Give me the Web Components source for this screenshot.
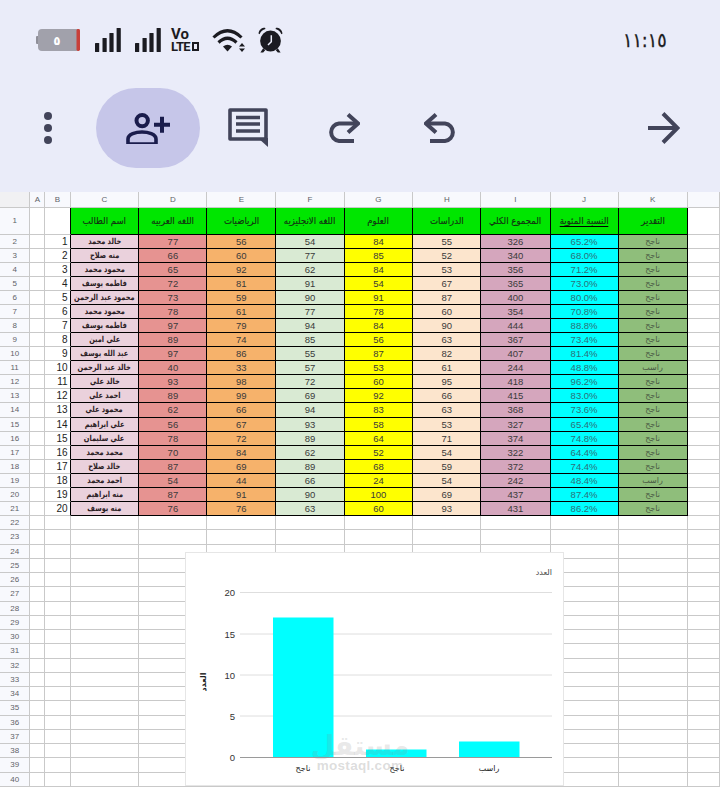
<!DOCTYPE html>
<html lang="ar">
<head>
<meta charset="utf-8">
<title>Sheet</title>
<style>
	html, body { margin: 0; padding: 0; background: #fff; }
	body { width: 720px; height: 788px; overflow: hidden; font-family: "Liberation Sans", "DejaVu Sans", sans-serif; }
</style>
</head>
<body>
<phone-screen>
	<status-bar slot="top" time="١١:١٥"></status-bar>
	<sheet-toolbar slot="top"></sheet-toolbar>
	<sheet-grid></sheet-grid>
	<sheet-chart slot="over"></sheet-chart>
</phone-screen>

<script>
(() => {

	const font = `"Liberation Sans", "DejaVu Sans", sans-serif`;
	const icon_color = '#42445a';
	const ink = '#1b1b21';

	const col_edges = [30.3, 45.3, 70.6, 139.4, 207.4, 276.3, 344.7, 413.3, 481.3, 550.6, 618.6, 687.6, 720];
	const col_letters = ['A', 'B', 'C', 'D', 'E', 'F', 'G', 'H', 'I', 'J', 'K', ''];
	const headers = ['اسم الطالب', 'اللغه العربيه', 'الرياضيات', 'اللغه الانجليزيه', 'العلوم', 'الدراسات', 'المجموع الكلي', 'النسبة المئوية', 'التقدير'];
	const pass = 'ناجح';
	const fail = 'راسب';

	// name, arabic, maths, english, science, studies, total
	const students = [
		['خالد محمد', 77, 56, 54, 84, 55, 326],
		['منه صلاح', 66, 60, 77, 85, 52, 340],
		['محمود محمد', 65, 92, 62, 84, 53, 356],
		['فاطمه يوسف', 72, 81, 91, 54, 67, 365],
		['محمود عبد الرحمن', 73, 59, 90, 91, 87, 400],
		['محمود محمد', 78, 61, 77, 78, 60, 354],
		['فاطمه يوسف', 97, 79, 94, 84, 90, 444],
		['علي امين', 89, 74, 85, 56, 63, 367],
		['عبد الله يوسف', 97, 86, 55, 87, 82, 407],
		['خالد عبد الرحمن', 40, 33, 57, 53, 61, 244],
		['خالد علي', 93, 98, 72, 60, 95, 418],
		['احمد علي', 89, 99, 69, 92, 66, 415],
		['محمود علي', 62, 66, 94, 83, 63, 368],
		['علي ابراهيم', 56, 67, 93, 58, 53, 327],
		['علي سليمان', 78, 72, 89, 64, 71, 374],
		['محمد محمد', 70, 84, 62, 52, 54, 322],
		['خالد صلاح', 87, 69, 89, 68, 59, 372],
		['احمد محمد', 54, 44, 66, 24, 54, 242],
		['منه ابراهيم', 87, 91, 90, 100, 69, 437],
		['منه يوسف', 76, 76, 63, 60, 93, 431]
	];

	// one fill per column, C to K
	const fills = ['#ead1dc', '#e69391', '#f6b26b', '#d9ead3', '#ffff00', '#fce5cd', '#d5a6bd', '#00ffff', '#8fbe7b'];

	customElements.define('phone-screen',
		class PhoneScreen extends HTMLElement {
			constructor() {
				super();
				this.attachShadow({ mode: 'open' });
				this.shadowRoot.innerHTML = `
					<style>
						:host {
							display: block;
							position: relative;
							width: 720px;
							height: 788px;
							overflow: hidden;
							background: #fff;
							font-family: ${font};
						}

						.top {
							height: 192px;
							background: #eaecf9;
						}
					</style>
					<div class="top"><slot name="top"></slot></div>
					<slot></slot>
					<slot name="over"></slot>
				`;
			}
		}
	);

	customElements.define('status-bar',
		class StatusBar extends HTMLElement {
			constructor() {
				super();
				this.attachShadow({ mode: 'open' });
				const signal = `
					<svg class="signal" width="26" height="24" viewBox="0 0 26 24" fill="${ink}">
						<rect x="0" y="15" width="4.2" height="9" rx=".6"/>
						<rect x="7.5" y="10" width="4.2" height="14" rx=".6"/>
						<rect x="14.4" y="5" width="4.2" height="19" rx=".6"/>
						<rect x="21.6" y="0" width="4.2" height="24" rx=".6"/>
					</svg>
				`;
				this.shadowRoot.innerHTML = `
					<style>
						:host {
							display: flex;
							align-items: center;
							height: 88px;
							box-sizing: border-box;
							padding: 0 53px 8px 36px;
						}

						svg { flex: none; display: block; }
						.signal { margin-left: 14px; }
						.signal.first { margin-left: 15px; }

						.volte {
							flex: none;
							width: 31px;
							margin-left: 10px;
							color: ${ink};
							font: 700 15px/13px Roboto, sans-serif;
						}

						.lte {
							display: flex;
							align-items: center;
							height: 12px;
							font-size: 13px;
							line-height: 12px;
							letter-spacing: -.7px;
						}

						.lte i {
							display: block;
							width: 7px;
							height: 9px;
							box-sizing: border-box;
							margin-left: 2px;
							border: 2.3px solid ${ink};
						}

						.time {
							margin-left: auto;
							font: 400 20px "DejaVu Sans", sans-serif;
							color: ${ink};
							-webkit-text-stroke: .3px ${ink};
							direction: ltr;
							transform: scaleX(.88);
							transform-origin: right center;
						}
					</style>
					<svg width="44" height="24" viewBox="0 0 44 24">
						<rect x="0" y="8" width="3" height="8" rx="1" fill="#8f8f99"/>
						<rect x="2" y="1" width="42" height="22" rx="4" fill="#a1a1ab"/>
						<rect x="40.5" y="1" width="3.5" height="22" rx="1.4" fill="#c8403a"/>
						<text x="21" y="16.5" text-anchor="middle" font-family="DejaVu Sans" font-weight="700" font-size="12" fill="#fff">٥</text>
					</svg>
					${signal.replace('class="signal"', 'class="signal first"')}
					${signal}
					<div class="volte">Vo<div class="lte">LTE<i></i></div></div>
					<svg style="margin-left:10px" width="34" height="24" viewBox="0 0 34 24" fill="${ink}">
						<g fill="none" stroke="${ink}" stroke-width="3.1">
							<path d="M1.5 9.5Q15.5-4 29.5 9.5"/>
							<path d="M6.5 14.5Q15.5 6 24.5 14.5"/>
						</g>
						<path d="M11 18.5Q15.5 15 20 18.5L15.5 23.5z"/>
						<path d="M30 15l3 3.6h-6zM27 20.6h6L30 24z"/>
					</svg>
					<svg style="margin-left:12px" width="25" height="26" viewBox="0 0 25 26" fill="${ink}">
						<circle cx="12.5" cy="14" r="10.4"/>
						<path d="M0.5 6.5C1 2.8 3.6 0.8 7 0.8L7.5 2C4.8 2.8 2.8 4.4 1.6 7.2zM24.5 6.5C24 2.8 21.4 0.8 18 0.8L17.5 2C20.2 2.8 22.2 4.4 23.4 7.2z"/>
						<path d="M5 21.5L2.4 25.5H5.2L7.4 23zM20 21.5L22.6 25.5H19.8L17.6 23z"/>
						<path d="M13.3 8.2V14.8L10 18" fill="none" stroke="#eaecf9" stroke-width="1.5"/>
					</svg>
					<div class="time">${this.getAttribute('time')}</div>
				`;
			}
		}
	);

	customElements.define('sheet-toolbar',
		class SheetToolbar extends HTMLElement {
			constructor() {
				super();
				this.attachShadow({ mode: 'open' });
				this.shadowRoot.innerHTML = `
					<style>
						:host {
							display: grid;
							grid-template-columns: 96px 104px 96px 96px 96px 1fr 96px 8px;
							height: 80px;
						}

						.cell {
							display: flex;
							align-items: center;
							justify-content: center;
						}

						.pill {
							background: #c6c6e9;
							border-radius: 40px;
						}
					</style>
					<div class="cell">
						<svg width="10" height="34" viewBox="0 0 10 34" fill="${icon_color}">
							<circle cx="5" cy="5" r="4"/>
							<circle cx="5" cy="17" r="4"/>
							<circle cx="5" cy="29" r="4"/>
						</svg>
					</div>
					<div class="cell pill">
						<svg width="44" height="32" viewBox="0 0 44 32" fill="none" stroke="#1a1c4c" stroke-width="4">
							<circle cx="16.2" cy="8.6" r="5.7"/>
							<path d="M2 32V27C2 22 10 20 16 20S30 22 30 27V32H2Z" stroke-width="3.6"/>
							<path d="M28 12.7H44M36 4.7V20.7" />
						</svg>
					</div>
					<div class="cell">
						<svg width="40" height="39" viewBox="0 0 40 39" style="margin-top:-1px">
							<path d="M2 2H38V31H2Z" fill="none" stroke="${icon_color}" stroke-width="3.6" stroke-linejoin="round"/>
							<path d="M30 30H40V39Z" fill="${icon_color}"/>
							<path d="M8 9.5H32M8 16H32M8 23H32" stroke="${icon_color}" stroke-width="3.6"/>
						</svg>
					</div>
					<div class="cell">
						<svg width="32" height="30" viewBox="0 0 32 30" fill="none" stroke="${icon_color}" stroke-width="4" style="transform:scaleX(-1)">
							<path d="M12 1.5L2 10.5L12 19.5"/>
							<path d="M2 10.5H21A8.8 8.8 0 0 1 21 28H6"/>
						</svg>
					</div>
					<div class="cell">
						<svg width="32" height="30" viewBox="0 0 32 30" fill="none" stroke="${icon_color}" stroke-width="4">
							<path d="M12 1.5L2 10.5L12 19.5"/>
							<path d="M2 10.5H21A8.8 8.8 0 0 1 21 28H6"/>
						</svg>
					</div>
					<div></div>
					<div class="cell">
						<svg width="32" height="32" viewBox="0 0 32 32" fill="none" stroke="${icon_color}" stroke-width="4">
							<path d="M0 16H29"/>
							<path d="M15 1.5L29.5 16L15 30.5"/>
						</svg>
					</div>
					<div></div>
				`;
			}
		}
	);

	customElements.define('sheet-grid',
		class SheetGrid extends HTMLElement {
			constructor() {
				super();
				this.attachShadow({ mode: 'open' });

				const widths = col_edges.map((edge, i) => (edge - (col_edges[i - 1] || 0)).toFixed(1) + 'px');
				const heights = ['15.5px', '27px', ...Array(20).fill('14.08px'), ...Array(19).fill('14.25px')];

				let cells = '<div class="head corner"></div>';
				cells += col_letters.map(letter => `<div class="head">${letter}</div>`).join('');

				cells += this.title_row();
				students.forEach((student, i) => {
					cells += this.student_row(student, i);
				});

				for (let row = 22; row <= 40; row++) {
					cells += `<div class="head side">${row}</div>`;
					cells += col_letters.map(() => '<div class="cell"></div>').join('');
				}

				this.shadowRoot.innerHTML = `
					<style>
						:host {
							display: grid;
							grid-template-columns: ${widths.join(' ')};
							grid-template-rows: ${heights.join(' ')};
							background: #fff;
							color: #3a3a3a;
						}

						div {
							box-sizing: border-box;
							display: flex;
							align-items: center;
							justify-content: center;
							min-width: 0;
							white-space: nowrap;
							border-right: 1px solid #c9c9c9;
							border-bottom: 1px solid #c9c9c9;
						}

						span { flex: none; display: block; }

						.head {
							background: #f8f9fd;
							color: #5f6368;
							font-size: 8px;
						}

						.corner { background: #f1f1f3; }

						.data {
							font-size: 9.5px;
							border-right-color: #000;
							border-bottom-color: #000;
						}

						.name {
							font: 700 7.5px "DejaVu Sans", sans-serif;
							color: #2a2024;
						}

						.name span { transform: scale(.88, 1.1); }

						.title {
							font: 400 9.5px "DejaVu Sans", sans-serif;
							background: #00e600;
							color: #123012;
							-webkit-text-stroke: .15px #123012;
							border-right-color: #000;
							border-bottom-color: #000;
						}

						.title span { transform: scaleX(.9); }
						.title.under span { border-bottom: 1px solid #000; }

						.mark {
							font: 400 8px "DejaVu Sans", sans-serif;
							color: #4a5a44;
						}

						.index {
							justify-content: flex-end;
							padding-right: 2px;
							font-size: 10px;
							color: #222;
							border-right-color: #000;
						}
					</style>
					${cells}
				`;
			}

			title_row() {
				let out = '<div class="head side">1</div><div class="cell"></div><div class="index"></div>';

				headers.forEach((text, i) => {
					out += `<div class="title ${i === 7 ? 'under' : ''}"><span>${text}</span></div>`;
				});

				return out + '<div class="cell"></div>';
			}

			student_row(student, i) {
				const [name, ...marks] = student;
				const total = marks[5];
				const percent = (total / 5).toFixed(1);
				const numbers = marks.map((mark, n) => `<div class="data" style="background:${fills[n + 1]}">${mark}</div>`).join('');
				const grade = total < 250 ? fail : pass;

				// row 11 of the sheet shows 96.2% although 418 / 5 is 83.6, the source has it that way
				const shown = total === 418 ? '96.2' : percent;

				return `
					<div class="head side">${i + 2}</div>
					<div class="cell"></div>
					<div class="index">${i + 1}</div>
					<div class="data name" style="background:${fills[0]}"><span>${name}</span></div>
					${numbers}
					<div class="data" style="background:${fills[7]};color:#2f6f78">${shown}%</div>
					<div class="data mark" style="background:${fills[8]}">${grade}</div>
					<div class="cell"></div>
				`;
			}
		}
	);

	customElements.define('sheet-chart',
		class SheetChart extends HTMLElement {
			constructor() {
				super();
				this.attachShadow({ mode: 'open' });

				// chart box starts at 185,552 on the screen, all numbers below are local
				const lines = [[40.5, '20'], [82, '15'], [123, '10'], [164, '5'], [205.5, '0']];
				const bars = [[88, 65.5, 60.5], [181, 197.5, 60.5], [274, 189.5, 60.5]];
				const labels = [[118, pass], [212, pass], [304, fail]];

				const grid = lines.slice(0, 4).map(([y, text]) => `
					<line x1="55" x2="367" y1="${y}" y2="${y}" stroke="#dedede"/>
				`).join('');
				const ticks = lines.map(([y, text]) => `
					<text x="50" y="${y + 3.5}" text-anchor="end" font-size="9.5" fill="#333">${text}</text>
				`).join('');
				const rects = bars.map(([x, y, w]) => `
					<rect x="${x}" y="${y}" width="${w}" height="${205.5 - y}" fill="#00ffff"/>
				`).join('');
				const names = labels.map(([x, text]) => `
					<text x="${x}" y="219" text-anchor="middle" font-family="DejaVu Sans" font-size="8" fill="#222">${text}</text>
				`).join('');

				this.shadowRoot.innerHTML = `
					<style>
						:host {
							position: absolute;
							left: 185px;
							top: 552px;
							width: 379px;
							height: 234px;
							box-sizing: border-box;
							background: #fff;
							border: 1px solid #e6e6e6;
						}

						svg { position: absolute; left: -1px; top: -1px; display: block; }
					</style>
					<svg width="379" height="234" viewBox="0 0 379 234" font-family="Liberation Sans">
						<text x="367" y="23" text-anchor="end" font-family="DejaVu Sans" font-size="8" fill="#444">العدد</text>
						<text transform="translate(21 130) rotate(-90)" text-anchor="middle" font-family="DejaVu Sans" font-weight="700" font-size="8" fill="#222">العدد</text>
						${grid}
						${ticks}
						${rects}
						<line x1="55" x2="367" y1="205.5" y2="205.5" stroke="#9a9a9a"/>
						${names}
						<text x="175" y="203" text-anchor="middle" font-family="DejaVu Sans" font-weight="700" font-size="27" fill="#8a8a8a" fill-opacity=".2">مستقل</text>
						<text x="175" y="218" text-anchor="middle" font-weight="700" font-size="13.5" letter-spacing=".3" fill="#8a8a8a" fill-opacity=".3">mostaql.com</text>
					</svg>
				`;
			}
		}
	);

})();
</script>
</body>
</html>
